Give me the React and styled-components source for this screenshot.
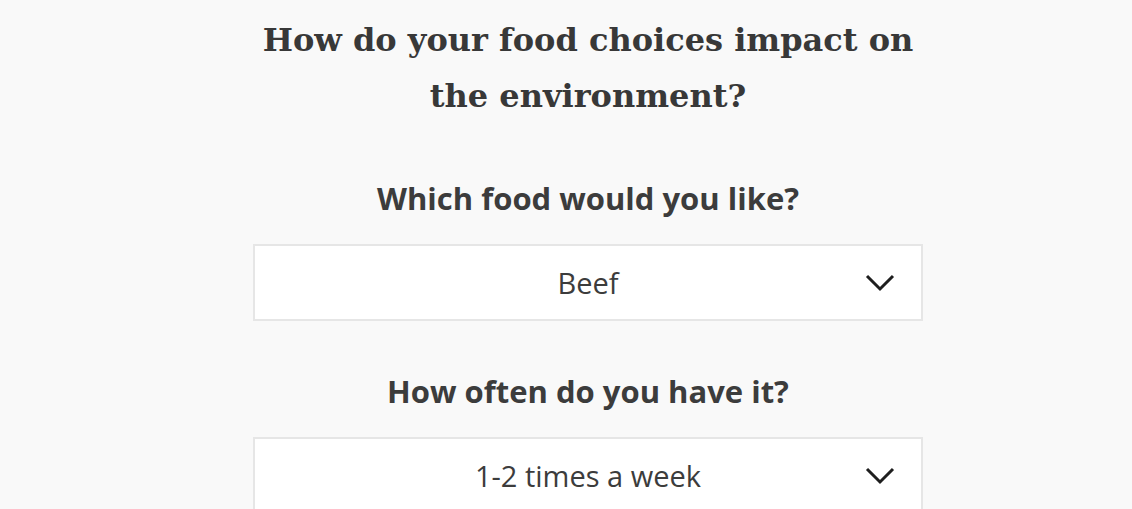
import React from 'react';
import styled, { createGlobalStyle } from 'styled-components';

const GlobalStyle = createGlobalStyle`
    html, body {
        margin: 0;
        padding: 0;
        background-color: #F9F9F9;
    }
`

const Wrapper = styled.section`
    display: flex;
    flex-direction: column;
    align-items: center;
    padding-left: 44px;
    padding-top: 12px;
    height: 509px;
    overflow: hidden;
    box-sizing: border-box;
`

const Title = styled.h2`
    margin: 0 0 54px;
    font-family: "DejaVu Serif", serif;
    font-weight: bold;
    font-size: 32px;
    line-height: 56px;
    color: #383838;
    text-align: center;
    width: 670px;
`

const Question = styled.label`
    display: block;
    margin: 0 0 26px;
    font-family: "Open Sans", sans-serif;
    font-weight: 700;
    font-size: 31px;
    line-height: 40px;
    color: #3C3C3C;
    text-align: center;
`

const Field = styled.div`
    display: flex;
    flex-direction: column;
    align-items: center;
    margin-bottom: ${({ gap }) => gap || 0}px;
`

const Select = styled.div`
    position: relative;
    width: 670px;
    height: 77px;
    box-sizing: border-box;
    background-color: #FFFFFF;
    border: 2px solid #E6E6E6;
    display: flex;
    align-items: center;
    justify-content: center;
    font-family: "Open Sans", sans-serif;
    font-size: 29px;
    color: #3C3C3C;
`

const Chevron = styled.svg`
    position: absolute;
    right: 26px;
    top: 50%;
    transform: translateY(-50%);
`

const Dropdown = ({ value }) => {
    return (
        <Select>
            <span>{value}</span>
            <Chevron width="30" height="18" viewBox="0 0 30 18">
                <path d="M2 2 L15 15 L28 2" fill="none" stroke="#1E1E1E" strokeWidth="3" />
            </Chevron>
        </Select>
    )
}

const App = () => {
    return (
        <Wrapper>
            <GlobalStyle />
            <Title>How do your food choices impact on the environment?</Title>
            <Field gap={50}>
                <Question>Which food would you like?</Question>
                <Dropdown value="Beef" />
            </Field>
            <Field>
                <Question>How often do you have it?</Question>
                <Dropdown value="1-2 times a week" />
            </Field>
        </Wrapper>
    );
}

export default App;
